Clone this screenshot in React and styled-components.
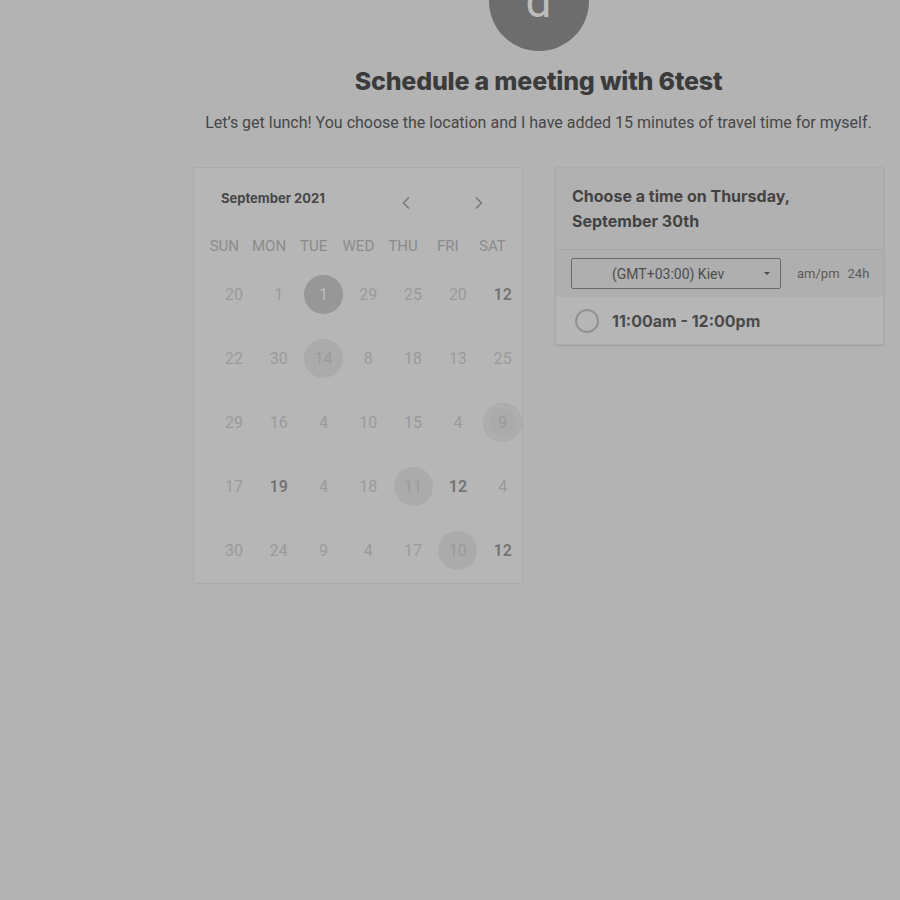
import React from "react";
import styled, { createGlobalStyle } from "styled-components";

const Global = createGlobalStyle`
  html, body { margin: 0; padding: 0; background: #b3b3b3; }
  body { font-family: Roboto, "Liberation Sans", sans-serif; overflow: hidden; }
`;

const Page = styled.div`
  width: 900px;
  height: 900px;
  overflow: hidden;
  box-sizing: border-box;
  padding-left: 193px;
`;

const Column = styled.div`
  width: 691px;
  display: flex;
  flex-direction: column;
  align-items: center;
`;

const Avatar = styled.div`
  width: 100px;
  height: 100px;
  margin-top: -49px;
  border-radius: 50%;
  background: #6d6d6d;
  color: #bdbdbd;
  font-family: Roboto, sans-serif;
  font-size: 46px;
  display: flex;
  align-items: center;
  justify-content: center;
  line-height: 1;
`;

const Title = styled.h1`
  margin: 14px 0 0;
  font-family: Inter, "Noto Sans", sans-serif;
  font-weight: 800;
  font-size: 25px;
  line-height: 32px;
  letter-spacing: -0.2px;
  color: #3b3b3b;
`;

const Subtitle = styled.p`
  margin: 14px 0 0;
  font-family: Roboto, sans-serif;
  font-size: 16px;
  line-height: 24px;
  color: #474747;
`;

const Cards = styled.div`
  margin-top: 32px;
  width: 100%;
  display: flex;
  align-items: flex-start;
  gap: 32px;
`;

const CalendarCard = styled.div`
  width: 330px;
  height: 417px;
  box-sizing: border-box;
  border: 1px solid #a9a9a9;
  border-radius: 2px;
  background: #b6b6b6;
  padding: 17px 0 0 8px;
`;

const CalHeader = styled.div`
  display: flex;
  align-items: flex-start;
  height: 30px;
  padding-left: 19px;
`;

const Month = styled.div`
  font-family: Inter, sans-serif;
  font-weight: 700;
  font-size: 13px;
  line-height: 30px;
  height: 30px;
  color: #474747;
  margin-top: -2px;
  width: 176px;
`;

const NavButton = styled.button`
  border: none;
  background: none;
  padding: 0;
  width: 18px;
  height: 18px;
  margin-top: 9px;
  margin-left: ${(p) => p.$ml}px;
  display: flex;
  align-items: center;
  justify-content: center;
  color: #7b7b7b;
`;

const WeekRow = styled.div`
  margin-top: 16px;
  display: grid;
  grid-template-columns: repeat(7, 44.7px);
  height: 30px;
  align-items: center;
`;

const WeekDay = styled.div`
  text-align: center;
  font-family: Roboto, sans-serif;
  font-size: 15px;
  color: #8b8b8b;
`;

const DayGrid = styled.div`
  margin-left: 9.5px;
  margin-top: 2px;
  display: grid;
  grid-template-columns: repeat(7, 44.8px);
  grid-auto-rows: 63.8px;
  align-items: center;
  justify-items: center;
`;

const Day = styled.div`
  width: 39px;
  height: 39px;
  border-radius: 50%;
  display: flex;
  align-items: center;
  justify-content: center;
  font-family: Roboto, sans-serif;
  font-size: 16px;
  font-weight: ${(p) => (p.$bold ? 600 : 400)};
  color: ${(p) =>
    p.$selected ? "#bdbdbd" : p.$bold ? "#747474" : "#9a9a9a"};
  background: ${(p) =>
    p.$selected ? "#979797" : p.$soft ? "#ababab" : "transparent"};
  box-shadow: ${(p) => (p.$ring ? "0 0 0 1px #acacac inset, 0 0 0 6px #aeaeae inset" : "none")};
`;

const TimeCard = styled.div`
  width: 329px;
  box-sizing: border-box;
  border: 1px solid #aaaaaa;
  border-radius: 2px;
  background: #b6b6b6;
  box-shadow: 0 1px 2px rgba(0, 0, 0, 0.12);
  overflow: hidden;
`;

const TimeHeader = styled.div`
  background: #b1b1b1;
  padding: 16px 16px 15px;
  font-family: Inter, sans-serif;
  font-weight: 700;
  font-size: 16px;
  line-height: 25px;
  color: #434343;
  border-bottom: 1px solid #a7a7a7;
`;

const TzRow = styled.div`
  background: #afafaf;
  height: 47px;
  box-sizing: border-box;
  padding: 8px 10px 0 15px;
  display: flex;
  align-items: flex-start;
  gap: 16px;
`;

const Select = styled.div`
  flex: 0 0 210px;
  width: 210px;
  height: 31px;
  box-sizing: border-box;
  border: 1px solid #6a6a6a;
  border-radius: 2px;
  display: flex;
  align-items: center;
  padding: 0 10px 0 40px;
  font-family: Roboto, sans-serif;
  font-size: 14px;
  color: #4d4d4d;
`;

const SelectText = styled.span`
  flex: 1;
`;

const Caret = styled.span`
  width: 0;
  height: 0;
  border-left: 3.5px solid transparent;
  border-right: 3.5px solid transparent;
  border-top: 3.5px solid #4d4d4d;
`;

const Formats = styled.div`
  display: flex;
  gap: 8px;
  height: 31px;
  align-items: center;
  font-family: Roboto, sans-serif;
  font-size: 13px;
  color: #5a5a5a;
  white-space: nowrap;
`;

const Slot = styled.div`
  height: 47px;
  display: flex;
  align-items: center;
  padding-left: 19px;
  gap: 13px;
  font-family: Inter, sans-serif;
  font-weight: 700;
  font-size: 16px;
  color: #4a4a4a;
`;

const Radio = styled.span`
  width: 20px;
  height: 20px;
  border-radius: 50%;
  border: 2px solid #929292;
`;

const Chevron = ({ dir }) => (
  <svg width="10" height="14" viewBox="0 0 10 14" fill="none">
    <path
      d={dir === "left" ? "M8 1.5 L2.5 7 L8 12.5" : "M2 1.5 L7.5 7 L2 12.5"}
      stroke="currentColor"
      strokeWidth="1.6"
    />
  </svg>
);

const weekDays = ["SUN", "MON", "TUE", "WED", "THU", "FRI", "SAT"];

const days = [
  [{ n: 20 }, { n: 1 }, { n: 1, selected: true }, { n: 29 }, { n: 25 }, { n: 20 }, { n: 12, bold: true }],
  [{ n: 22 }, { n: 30 }, { n: 14, soft: true }, { n: 8 }, { n: 18 }, { n: 13 }, { n: 25 }],
  [{ n: 29 }, { n: 16 }, { n: 4 }, { n: 10 }, { n: 15 }, { n: 4 }, { n: 9, soft: true, ring: true }],
  [{ n: 17 }, { n: 19, bold: true }, { n: 4 }, { n: 18 }, { n: 11, soft: true }, { n: 12, bold: true }, { n: 4 }],
  [{ n: 30 }, { n: 24 }, { n: 9 }, { n: 4 }, { n: 17 }, { n: 10, soft: true }, { n: 12, bold: true }],
];

export default function App() {
  return (
    <>
      <Global />
      <Page>
        <Column>
          <Avatar>d</Avatar>
          <Title>Schedule a meeting with 6test</Title>
          <Subtitle>
            Let’s get lunch! You choose the location and I have added 15 minutes of travel time for myself.
          </Subtitle>
          <Cards>
            <CalendarCard>
              <CalHeader>
                <Month>September 2021</Month>
                <NavButton $ml={0}>
                  <Chevron dir="left" />
                </NavButton>
                <NavButton $ml={55}>
                  <Chevron dir="right" />
                </NavButton>
              </CalHeader>
              <WeekRow>
                {weekDays.map((d) => (
                  <WeekDay key={d}>{d}</WeekDay>
                ))}
              </WeekRow>
              <DayGrid>
                {days.flat().map((d, i) => (
                  <Day
                    key={i}
                    $bold={d.bold}
                    $selected={d.selected}
                    $soft={d.soft}
                    $ring={d.ring}
                  >
                    {d.n}
                  </Day>
                ))}
              </DayGrid>
            </CalendarCard>
            <TimeCard>
              <TimeHeader>
                Choose a time on Thursday,
                <br />
                September 30th
              </TimeHeader>
              <TzRow>
                <Select>
                  <SelectText>(GMT+03:00) Kiev</SelectText>
                  <Caret />
                </Select>
                <Formats>
                  <span>am/pm</span>
                  <span>24h</span>
                </Formats>
              </TzRow>
              <Slot>
                <Radio />
                11:00am - 12:00pm
              </Slot>
            </TimeCard>
          </Cards>
        </Column>
      </Page>
    </>
  );
}
